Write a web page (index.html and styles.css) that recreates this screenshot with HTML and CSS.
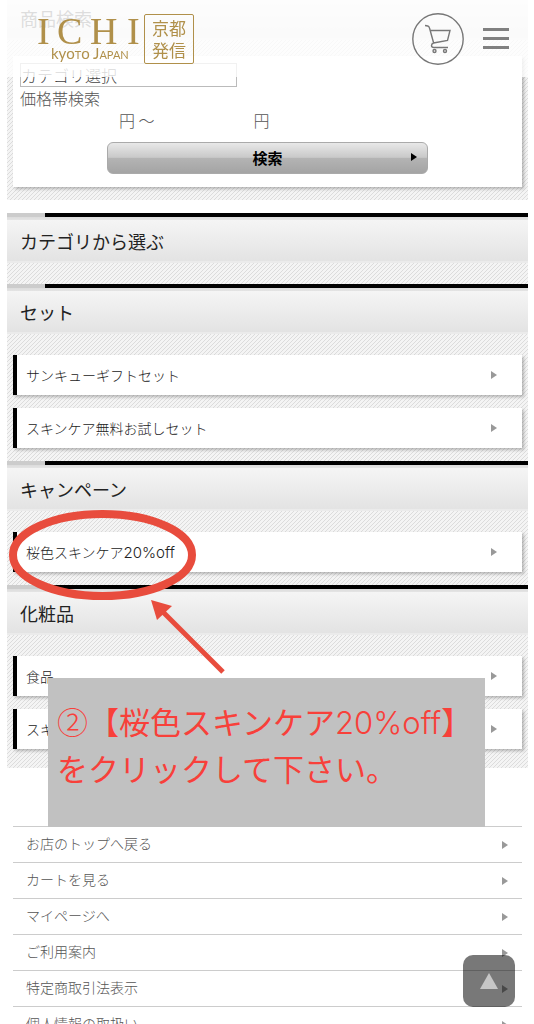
FILE: index.html
```
<!DOCTYPE html>
<html lang="ja">
<head>
  <meta charset="UTF-8">
  <meta name="viewport" content="width=device-width, initial-scale=1.0">
  <title>ICHI kyoto Japan</title>
  <link rel="stylesheet" href="styles.css">
</head>
<body>
  <header class="header">
    <a href="#" class="logo">
      <svg class="logo-name" width="104" height="56" viewBox="0 0 104 56">
        <text class="logo-ichi" x="-2 18 51 88" y="33">ICHI</text>
        <text class="logo-sub" x="12" y="48">kyo<tspan class="sc">t</tspan>o J<tspan class="sc">apan</tspan></text>
      </svg>
      <span class="stamp">京都<br>発信</span>
    </a>
    <a href="#" class="cart" aria-label="カート">
      <svg width="52" height="52" viewBox="0 0 52 52" fill="none" stroke="#777" stroke-width="1.4">
        <circle cx="26" cy="26" r="25.2"/>
        <path d="M13 12.500C16 12.500 17 13 17.500 15L21.500 29.500M18.500 17.500H38L35.500 27.500 21.500 30C20 30.500 19.500 31.200 19.500 32.500C19.500 34 20.500 34.500 22 34.500H36"/>
        <circle cx="22.500" cy="38" r="1.500"/>
        <circle cx="33" cy="38" r="1.500"/>
      </svg>
    </a>
    <button type="button" class="menu" aria-label="メニュー"><i></i><i></i><i></i></button>
  </header>

  <main class="page">
    <section class="panel search">
      <h2 class="heading">商品検索</h2>
      <form class="card">
        <select class="category" aria-label="カテゴリ選択">
          <option>カテゴリ選択</option>
        </select>
        <p>価格帯検索</p>
        <div class="price">
          <input type="text" aria-label="下限価格"><span>円 〜</span>
          <input type="text" aria-label="上限価格"><span>円</span>
        </div>
        <button type="submit" class="btn">検索</button>
      </form>
    </section>

    <section class="panel">
      <h2 class="heading">カテゴリから選ぶ</h2>
      <h2 class="heading">セット</h2>
      <ul class="list">
        <li><a href="#">サンキューギフトセット</a></li>
        <li><a href="#">スキンケア無料お試しセット</a></li>
      </ul>
      <h2 class="heading">キャンペーン</h2>
      <ul class="list">
        <li><a href="#"><span>桜色スキンケア<span class="latin">20%off</span></span></a></li>
      </ul>
      <h2 class="heading">化粧品</h2>
      <ul class="list">
        <li><a href="#">食品</a></li>
        <li><a href="#">スキ</a></li>
      </ul>
    </section>

    <ul class="links">
      <li><a href="#">お店のトップへ戻る</a></li>
      <li><a href="#">カートを見る</a></li>
      <li><a href="#">マイページへ</a></li>
      <li><a href="#">ご利用案内</a></li>
      <li><a href="#">特定商取引法表示</a></li>
      <li><a href="#">個人情報の取扱い</a></li>
    </ul>
  </main>

  <!-- Guide marks over the page -->
  <svg class="mark" width="230" height="170" viewBox="0 0 230 170">
    <ellipse cx="102.500" cy="55" rx="89.500" ry="41" fill="none" stroke="#e84c3d" stroke-width="8"/>
    <path d="M163 112L223 172" stroke="#e84c3d" stroke-width="5"/>
    <path d="M151 100L172 106L157 120Z" fill="#e84c3d"/>
  </svg>
  <div class="note"><span class="step">②</span>【桜色スキンケア<span class="latin">20%off</span>】<br>をクリックして下さい。</div>

  <button type="button" class="to-top" aria-label="ページの先頭へ"></button>
</body>
</html>
```
FILE: styles.css
```
* {
  margin: 0;
  padding: 0;
  box-sizing: border-box;
}

body {
  position: relative;
  height: 100vh;
  overflow: hidden;
  background-color: #fff;
  color: #555;
  font-family: "Noto Sans CJK JP", sans-serif;
  font-weight: 300;
  font-size: 14px;
}

a {
  color: inherit;
  text-decoration: none;
}

ul {
  list-style: none;
}

.latin {
  font-family: Inter, sans-serif;
}

.list .latin {
  font-size: 15px;
}

/* Header */
.header {
  position: fixed;
  top: 0;
  left: 0;
  right: 0;
  z-index: 5;
  display: flex;
  align-items: center;
  height: 77px;
  padding: 0 24px 0 39px;
  background-color: rgba(255, 255, 255, 0.8);
}

.logo {
  display: flex;
  align-items: center;
  gap: 1px;
  margin-right: auto;
  color: #b0904a;
}

.logo-name {
  overflow: visible;
  fill: #b0904a;
}

.logo-ichi {
  font-family: "Liberation Serif", serif;
  font-size: 38px;
  font-weight: 400;
}

.logo-sub {
  font-family: Lato, sans-serif;
  font-size: 15px;
  font-weight: 400;
}

.sc {
  font-variant: small-caps;
}

.stamp {
  width: 50px;
  height: 50px;
  padding-top: 2px;
  border: 1px solid #b0904a;
  border-radius: 2px;
  font-size: 17px;
  font-weight: 400;
  line-height: 22px;
  text-align: center;
}

.cart {
  height: 52px;
  margin-right: 18px;
}

.menu {
  display: flex;
  flex-direction: column;
  gap: 6px;
  width: 28px;
  padding: 1px;
  border: none;
  background: none;
}

.menu i {
  height: 3px;
  background-color: #808080;
}

/* Striped panels */
.page {
  padding: 0 6px 0 7px;
}

.panel {
  margin-bottom: 13px;
  padding-bottom: 6px;
  background: linear-gradient(135deg, #dcdcdc 13%, #f4f4f4 13%, #f4f4f4 50%, #dcdcdc 50%, #dcdcdc 63%, #f4f4f4 63%) 0 0 / 4px 4px;
}

.search {
  margin-top: -10px;
  padding-bottom: 13px;
}

.heading {
  height: 50px;
  margin-bottom: 21px;
  padding: 4px 13px 0;
  border-bottom: 2px solid #ebebeb;
  background:
    linear-gradient(to right, #ccc 38px, #000 38px) 0 0 / 100% 4px no-repeat,
    linear-gradient(#dcdcdc, #e4e4e4) 0 4px / 100% 3px no-repeat,
    linear-gradient(#f8f8f8, #e3e3e3);
  color: #222;
  font-size: 18px;
  font-weight: 400;
  line-height: 48px;
}

.search .heading {
  margin-bottom: 16px;
  color: #555;
}

.card {
  margin: 0 6px;
  padding: 7px 7px 13px;
  background-color: #fff;
  box-shadow: 2px 2px 3px rgba(0, 0, 0, 0.25);
  font-size: 16px;
  line-height: 22px;
}

.category {
  display: block;
  width: 217px;
  height: 24px;
  border: 1px solid #bbb;
  background-color: #fff;
  color: #444;
  font: inherit;
  line-height: 18px;
  appearance: none;
}

.price {
  display: flex;
}

.price input {
  width: 99px;
  border: none;
  background: none;
}

.btn {
  display: block;
  position: relative;
  width: 65%;
  height: 32px;
  margin: 11px auto 0;
  border: 1px solid #aaa;
  border-radius: 6px;
  background: linear-gradient(#e8e8e8, #c9c9c9 48%, #b4b4b4 50%, #a4a4a4);
  color: #000;
  font-family: inherit;
  font-size: 15px;
  font-weight: 700;
  line-height: 28px;
}

.btn::after {
  content: "";
  position: absolute;
  top: 10px;
  right: 10px;
  border: 4px solid transparent;
  border-left: 6px solid #000;
  border-right: none;
}

/* Category links */
.list a,
.links a {
  display: flex;
  align-items: center;
  justify-content: space-between;
}

.list a {
  height: 40px;
  margin: 0 6px 13px;
  padding: 0 25px 0 9px;
  border-left: 4px solid #000;
  background-color: #fff;
  box-shadow: 2px 2px 3px rgba(0, 0, 0, 0.25);
  color: #222;
}

.list a::after,
.links a::after {
  content: "";
  border: 4px solid transparent;
  border-left: 6px solid #999;
  border-right: none;
}

.links {
  margin: 58px 6px 0;
}

.links a {
  height: 36px;
  padding: 0 14px 0 13px;
  border-top: 1px solid #ccc;
  line-height: 32px;
  align-items: start;
}

.links a::after {
  margin-top: 14px;
}

/* Guide marks */
.mark {
  position: absolute;
  top: 500px;
  left: 0;
  overflow: visible;
}

.note {
  position: absolute;
  top: 678px;
  left: 48px;
  right: 49px;
  height: 149px;
  padding: 20px 0 0 9px;
  background-color: #c1c1c1;
  color: #f8403a;
  font-size: 31px;
  font-weight: 400;
  line-height: 45px;
  white-space: nowrap;
}

.note .latin,
.note .step {
  font-weight: 300;
}

.to-top {
  position: fixed;
  right: 19px;
  bottom: 17px;
  width: 52px;
  height: 52px;
  border: none;
  border-radius: 10px;
  background-color: rgba(0, 0, 0, 0.53);
}

.to-top::after {
  content: "";
  display: block;
  width: 0;
  margin: 0 auto;
  border: 9px solid transparent;
  border-top: none;
  border-bottom: 16px solid #c6c6c6;
}
```
